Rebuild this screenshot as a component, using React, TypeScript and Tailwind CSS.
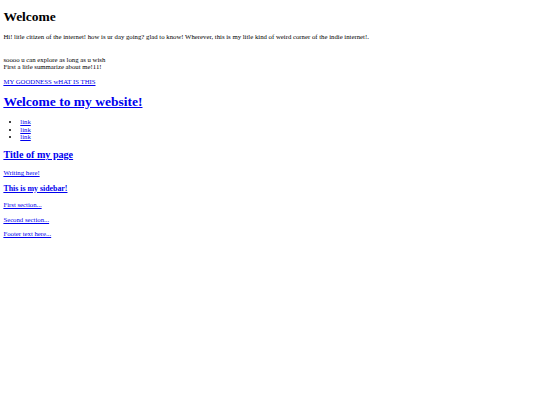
export default function App() {
  const link = 'text-[#0000ee] underline'
  return (
    <div className="min-h-screen bg-white">
      <div className="[zoom:0.4219] px-[8px] pb-[8px] font-['Liberation_Serif',serif] text-[16px] leading-[1.12] text-black">
        <h1 className="my-[21.44px] text-[32px] font-bold">Welcome</h1>
        <p className="my-[16px]">
          Hi! litle citizen of the internet! how is ur day going? glad to know! Wherever, this is my litle kind of weird
          corner of the indie internet!.
          <br />
          <br />
          <br />
          soooo u can explore as long as u wish
          <br />
          First a litle summarize about me!11!
        </p>
        <p className="my-[16px]">
          <a href="#" className={link}>MY GOODNESS wHAT IS THIS</a>
        </p>
        <a href="#" className={link}>
          <h1 className="my-[21.44px] text-[32px] font-bold">Welcome to my website!</h1>
        </a>
        <ul className="my-[16px] list-disc pl-[40px]">
          <li><a href="#" className={link}>link</a></li>
          <li><a href="#" className={link}>link</a></li>
          <li><a href="#" className={link}>link</a></li>
        </ul>
        <a href="#" className={link}>
          <h2 className="my-[19.92px] text-[24px] font-bold">Title of my page</h2>
          <p className="my-[16px]">Writing here!</p>
        </a>
        <a href="#" className={link}>
          <h3 className="my-[18.72px] text-[18.72px] font-bold">This is my sidebar!</h3>
          <p className="my-[16px]">First section...</p>
          <p className="my-[16px]">Second section...</p>
        </a>
        <a href="#" className={link}>
          <p className="my-[16px]">Footer text here...</p>
        </a>
      </div>
    </div>
  )
}
